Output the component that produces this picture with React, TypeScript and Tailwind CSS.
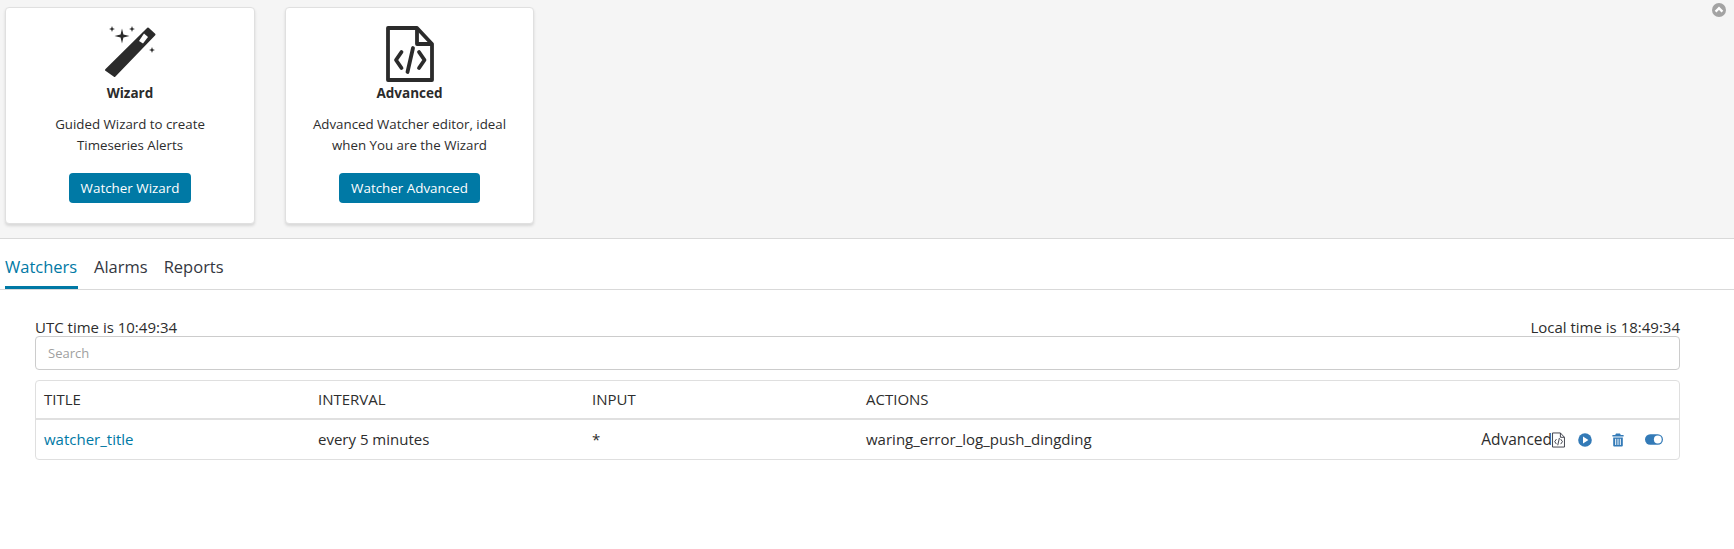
import React from "react";

function Wand() {
  return (
    <svg width="52" height="52" viewBox="104 26 52 52" className="block">
      <path fill="#2b2b2b" stroke="#2b2b2b" strokeWidth="2" strokeLinejoin="round" d="M106 70 L148 28.5 L154.5 34.5 L114.5 76 Z" />
      <path fill="#fff" d="M139 41 L144 33.5 L148 37 L143 43.5 Z" />
      <path fill="#2b2b2b" d="M122 28.5 L123.4 34.6 L129.5 36 L123.4 37.4 L122 43.5 L120.6 37.4 L114.5 36 L120.6 34.6 Z" />
      <path fill="#2b2b2b" d="M112 26 L112.8 28.2 L115 29 L112.8 29.8 L112 32 L111.2 29.8 L109 29 L111.2 28.2 Z" />
      <path fill="#2b2b2b" d="M132 26 L132.8 28.2 L135 29 L132.8 29.8 L132 32 L131.2 29.8 L129 29 L131.2 28.2 Z" />
      <path fill="#2b2b2b" d="M152 47 L152.8 49.2 L155 50 L152.8 50.8 L152 53 L151.2 50.8 L149 50 L151.2 49.2 Z" />
    </svg>
  );
}

function FileCode({ size, height, stroke, color }: { size: number; height: number; stroke: number; color: string }) {
  return (
    <svg width={size} height={height} viewBox="0 0 48 56" className="block">
      <path fill="none" stroke={color} strokeWidth={stroke} strokeLinejoin="round" d="M2 2 H31 L46 18 V54 H2 Z" />
      <path fill="none" stroke={color} strokeWidth={stroke} strokeLinejoin="round" d="M31 2 V18 H46" />
      <path fill="none" stroke={color} strokeWidth={stroke} strokeLinecap="round" strokeLinejoin="round" d="M15.5 26 L 10 34 L 15.5 42 M33 26 L 38.5 34 L 33 42 M27 22 L 21.5 46" />
    </svg>
  );
}

function Card({ title, lines, button, icon, w }: { title: string; lines: string[]; button: string; icon: React.ReactNode; w: string }) {
  return (
    <div className={`${w} h-[217px] bg-white rounded border border-[#e0e0e0] shadow-[0_2px_3px_rgba(0,0,0,0.12)] flex flex-col items-center pt-[18px]`}>
      <div className="h-[57px] flex items-start justify-center">{icon}</div>
      <div className="text-[13.5px] leading-[20px] font-bold text-[#2b2b2b]">{title}</div>
      <div className="mt-[11px] text-[13.3px] leading-[21px] text-[#2d2d2d] text-center">
        {lines.map((l) => (
          <div key={l}>{l}</div>
        ))}
      </div>
      <button className="mt-[17px] h-[30px] px-3 rounded-[4px] bg-[#0079a5] text-white text-[13.4px] leading-[30px]">{button}</button>
    </div>
  );
}

export default function App() {
  return (
    <div className="w-[1734px] h-[549px] bg-white overflow-hidden text-[#2d2d2d] font-['Open_Sans','Noto_Sans',sans-serif]">
      <div className="relative h-[239px] bg-[#f5f5f5] border-b border-[#d9d9d9] pt-[7px] pl-[5px] flex gap-[30px]">
        <Card
          w="w-[250px]"
          title="Wizard"
          lines={["Guided Wizard to create", "Timeseries Alerts"]}
          button="Watcher Wizard"
          icon={<Wand />}
        />
        <Card
          w="w-[249px]"
          title="Advanced"
          lines={["Advanced Watcher editor, ideal", "when You are the Wizard"]}
          button="Watcher Advanced"
          icon={<FileCode size={48} height={56} stroke={3.8} color="#2b2b2b" />}
        />
        <svg width="14" height="14" viewBox="0 0 14 14" className="absolute left-[1712px] top-[3px]">
          <circle cx="7" cy="7" r="7" fill="#a3a3a3" />
          <path d="M3.6 8.6 L7 5.2 L10.4 8.6" fill="none" stroke="#fff" strokeWidth="2.4" />
        </svg>
      </div>

      <div className="h-[51px] border-b border-[#d9d9d9] pl-[5px] flex gap-[16px] text-[16.5px]">
        <div className="h-[50px] border-b-[3px] border-[#0079a5] text-[#0079a5] leading-[55px] w-[73px] whitespace-nowrap">Watchers</div>
        <div className="leading-[55px] text-[#343741]">Alarms</div>
        <div className="leading-[55px] text-[#343741]">Reports</div>
      </div>

      <div className="px-[35px] w-[1715px]">
        <div className="mt-[29px] h-[17px] flex justify-between text-[15px] leading-[17px] text-[#2d2d2d]">
          <span>UTC time is 10:49:34</span>
          <span>Local time is 18:49:34</span>
        </div>
        <div className="h-[34px] rounded border border-[#cccccc] pl-3 text-[13px] leading-[32px] text-[#a0a0a0]">Search</div>
        <div className="mt-[10px] h-[80px] rounded border border-[#dfdfdf] text-[15px]">
          <div className="h-[39px] border-b-2 border-[#e0e0e0] flex items-center pl-2">
            <div className="w-[274px]">TITLE</div>
            <div className="w-[274px]">INTERVAL</div>
            <div className="w-[274px]">INPUT</div>
            <div>ACTIONS</div>
          </div>
          <div className="h-[39px] flex items-center pl-2">
            <div className="w-[274px] text-[#0079a5]">watcher_title</div>
            <div className="w-[274px]">every 5 minutes</div>
            <div className="w-[274px]">*</div>
            <div className="flex-1">waring_error_log_push_dingding</div>
            <div className="flex items-center pr-[16px]">
              <span className="text-[15.5px]">Advanced</span>
              <FileCode size={13} height={16} stroke={3.4} color="#343741" />
              <svg width="14" height="14" viewBox="0 0 14 14" className="ml-[13px]">
                <circle cx="7" cy="7" r="6.8" fill="#337ab7" />
                <path d="M5 3.6 L10.4 7 L5 10.4 Z" fill="#fff" />
              </svg>
              <svg width="12" height="14" viewBox="0 0 12 14" className="ml-[20px]">
                <path fill="#337ab7" d="M4 0.5 H8 L8.8 2 H11.6 V3.6 H0.4 V2 H3.2 Z M1.2 4.4 H10.8 V12.6 Q10.8 13.6 9.8 13.6 H2.2 Q1.2 13.6 1.2 12.6 Z" />
                <path stroke="#fff" strokeWidth="1" d="M3.7 5.8 V12 M6 5.8 V12 M8.3 5.8 V12" />
              </svg>
              <svg width="18" height="11" viewBox="0 0 18 11" className="ml-[21px]">
                <rect width="18" height="10.4" y="0.3" rx="5.2" fill="#337ab7" />
                <circle cx="12.8" cy="5.5" r="3.9" fill="#fff" />
              </svg>
            </div>
          </div>
        </div>
      </div>
    </div>
  );
}
